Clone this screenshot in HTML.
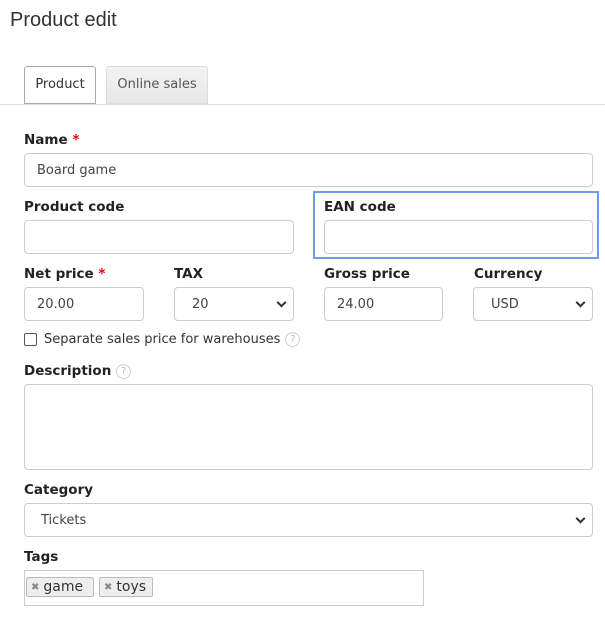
<!DOCTYPE html>
<html><head><style>
*{box-sizing:border-box;margin:0;padding:0}
body{width:605px;height:618px;background:#fff;font-family:"DejaVu Sans",Verdana,sans-serif;font-size:13px;color:#333;position:relative;overflow:hidden}
.a{position:absolute}
.lbl{position:absolute;font-weight:bold;color:#222;font-size:13.5px;line-height:16px}
.req{color:#e00}
.in{position:absolute;border:1px solid #ccc;border-radius:4px;background:#fff;padding-left:12px;display:flex;align-items:center;color:#444}
.sel::after{content:"";position:absolute;right:8px;top:50%;width:5px;height:5px;border-right:2px solid #333;border-bottom:2px solid #333;transform:translateY(-70%) rotate(45deg)}
.q{display:inline-block;width:15px;height:15px;border:1px solid #ccc;border-radius:50%;color:#bbb;font-size:10px;text-align:center;line-height:13px;vertical-align:middle;margin-left:5px;font-weight:normal}
.chip{position:absolute;top:577px;height:20px;border:1px solid #bbb;border-radius:2px;background:#eee;font-size:14px;line-height:18px;padding:0 4px;color:#333}
.chip b{color:#888;font-size:10px;margin-right:4px;vertical-align:1px}
</style></head><body>
<div class="a" style="left:10px;top:9px;font-family:'Liberation Sans',Arial,sans-serif;font-size:20px;color:#333">Product edit</div>
<div class="a" style="left:0;top:104px;width:605px;height:1px;background:#ddd"></div>
<div class="a" style="left:24px;top:66px;width:72px;height:38px;border:1px solid #aaa;border-radius:3px 3px 0 0;background:#fff;text-align:center;line-height:36px;color:#333">Product</div>
<div class="a" style="left:106px;top:66px;width:102px;height:38px;border:1px solid #ddd;border-radius:3px 3px 0 0;background:linear-gradient(#f2f2f2,#e8e8e8);text-align:center;line-height:36px;color:#555">Online sales</div>

<div class="lbl" style="left:24px;top:132px">Name <span class="req">*</span></div>
<div class="in" style="left:24px;top:153px;width:569px;height:34px">Board game</div>

<div class="lbl" style="left:24px;top:199px">Product code</div>
<div class="in" style="left:24px;top:220px;width:270px;height:34px"></div>
<div class="a" style="left:313px;top:191px;width:286px;height:68px;border:2px solid #6f9ce8"></div>
<div class="lbl" style="left:324px;top:199px">EAN code</div>
<div class="in" style="left:324px;top:220px;width:269px;height:34px"></div>

<div class="lbl" style="left:24px;top:266px">Net price <span class="req">*</span></div>
<div class="lbl" style="left:174px;top:266px">TAX</div>
<div class="lbl" style="left:324px;top:266px">Gross price</div>
<div class="lbl" style="left:474px;top:266px">Currency</div>
<div class="in" style="left:24px;top:287px;width:120px;height:34px">20.00</div>
<div class="in sel" style="left:174px;top:287px;width:120px;height:34px;padding-left:17px">20</div>
<div class="in" style="left:324px;top:287px;width:119px;height:34px">24.00</div>
<div class="in sel" style="left:473px;top:287px;width:120px;height:34px;padding-left:17px">USD</div>

<div class="a" style="left:24px;top:333px;width:13px;height:13px;border:1px solid #555;border-radius:2px"></div>
<div class="a" style="left:44px;top:332px;font-size:13px;color:#333">Separate sales price for warehouses<span class="q">?</span></div>

<div class="lbl" style="left:24px;top:363px">Description<span class="q">?</span></div>
<div class="in" style="left:24px;top:384px;width:569px;height:86px"></div>

<div class="lbl" style="left:24px;top:482px">Category</div>
<div class="in sel" style="left:24px;top:503px;width:569px;height:34px;padding-left:16px">Tickets</div>

<div class="lbl" style="left:24px;top:549px">Tags</div>
<div class="a" style="left:24px;top:570px;width:400px;height:36px;border:1px solid #ccc"></div>
<div class="chip" style="left:26px;width:68px"><b>✖</b>game</div>
<div class="chip" style="left:99px;width:54px"><b>✖</b>toys</div>
</body></html>
